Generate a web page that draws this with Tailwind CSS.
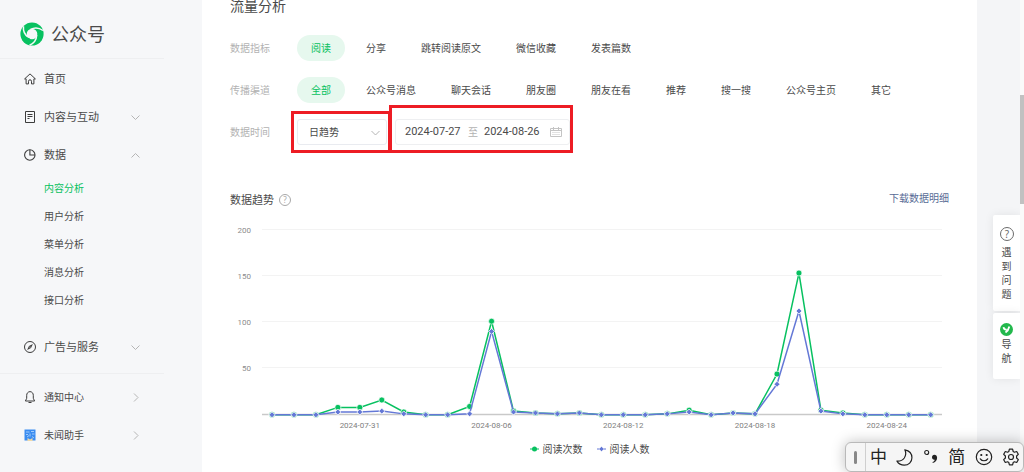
<!DOCTYPE html>
<html lang="zh-CN">
<head>
<meta charset="utf-8">
<meta name="viewport" content="width=device-width, initial-scale=1">
<title>公众号 - 内容分析</title>
<script src="https://cdn.jsdelivr.net/npm/@tailwindcss/browser@4"></script>
</head>
<body class="bg-white font-['Noto_Sans','Noto_Sans_CJK_SC',sans-serif] text-[#4a4a4a]">
<div class="relative flex min-h-screen overflow-hidden">

  <!-- Sidebar -->
  <aside class="w-[202px] shrink-0 bg-[#f6f7f9]">
    <div class="mr-[38px] flex h-[59px] items-center gap-[7px] border-b border-[#eeeff1] pt-[9px] pl-5">
      <svg class="size-6" viewBox="0 0 24 24" fill="none" stroke="#f6f7f9" stroke-width="1.500" aria-hidden="true">
        <circle cx="12" cy="12" r="11.600" fill="#07c160" stroke="none"/>
        <circle cx="12" cy="12" r="5.300" fill="#f6f7f9" stroke="none"/>
        <path d="M10.500 7.400C14 5.600 19 5.600 23 8.500"/>
        <path transform="rotate(120 12 12)" d="M10.500 7.400C14 5.600 19 5.600 23 8.500"/>
        <path transform="rotate(240 12 12)" d="M10.500 7.400C14 5.600 19 5.600 23 8.500"/>
        <path d="M6.200 15.200v3l2.600-1.300 1.500-.4z" fill="#07c160" stroke="none"/>
      </svg>
      <span class="text-lg leading-6">公众号</span>
    </div>
    <nav class="mr-[38px] text-[11px]" aria-label="主导航">
      <a href="#" class="mt-px flex h-[38px] items-center gap-2 pl-6">
        <svg class="size-3" viewBox="0 0 12 12" fill="none" stroke="#3c3c3c" stroke-width="1" stroke-linejoin="round"><path d="M6 .9.6 5.900h1.500v5h2.400V8.300a1.500 1.500 0 0 1 3 0v2.600h2.400v-5h1.500z"/></svg>
        <span>首页</span>
      </a>
      <a href="#" class="flex h-[38px] items-center gap-2 px-6">
        <svg class="size-3" viewBox="0 0 12 12" fill="none" stroke="#3c3c3c"><path d="M1.500.5h9v11h-9zM3.500 3.500h5M3.500 5.500h5M3.500 7.500h2"/></svg>
        <span class="flex-1">内容与互动</span>
        <svg class="h-[5px] w-[9px]" viewBox="0 0 9 5" fill="none" stroke="#b5b5b5"><path d="m.5.500 4 4 4-4"/></svg>
      </a>
      <a href="#" class="flex h-[38px] items-center gap-2 px-6">
        <svg class="size-3" viewBox="0 0 12 12" fill="none" stroke="#3c3c3c" stroke-width="1.100"><circle cx="5.800" cy="6" r="5.200"/><path d="M5.900.8V6h5.100"/></svg>
        <span class="flex-1">数据</span>
        <svg class="h-[5px] w-[9px]" viewBox="0 0 9 5" fill="none" stroke="#b5b5b5"><path d="m.5 4.500 4-4 4 4"/></svg>
      </a>
      <div class="mb-[14px] flex flex-col text-[10px]">
        <a href="#" class="flex h-7 items-center pl-11 text-[#07c160]" aria-current="page">内容分析</a>
        <a href="#" class="flex h-7 items-center pl-11">用户分析</a>
        <a href="#" class="flex h-7 items-center pl-11">菜单分析</a>
        <a href="#" class="flex h-7 items-center pl-11">消息分析</a>
        <a href="#" class="flex h-7 items-center pl-11">接口分析</a>
      </div>
      <a href="#" class="flex h-[38px] items-center gap-2 px-6">
        <svg class="size-3" viewBox="0 0 12 12" fill="none" stroke="#3c3c3c"><circle cx="6" cy="6" r="5.500"/><path d="M8.900 3.100 7 7 3.100 8.900 5 5z" fill="#3c3c3c" stroke="none"/><circle cx="6" cy="6" r=".6" fill="#f6f7f9" stroke="none"/></svg>
        <span class="flex-1">广告与服务</span>
        <svg class="h-[5px] w-[9px]" viewBox="0 0 9 5" fill="none" stroke="#b5b5b5"><path d="m.5.500 4 4 4-4"/></svg>
      </a>
      <div class="mt-[7px] border-t border-[#eeeff1] pt-1 text-[10px]">
        <a href="#" class="flex h-[38px] items-center gap-2 px-6">
          <svg class="size-3" viewBox="0 0 12 12" fill="none" stroke="#3c3c3c" stroke-linejoin="round"><path d="M6 .6C3.900.8 2.700 2.300 2.700 4.300v3L1.400 10h9.200L9.300 7.300v-3C9.300 2.300 8.100.8 6 .6zM4.500 11.500h3"/></svg>
          <span class="flex-1">通知中心</span>
          <svg class="h-[9px] w-[9px]" viewBox="0 0 9 9" fill="none" stroke="#b5b5b5"><path d="m3 .5 4 4-4 4"/></svg>
        </a>
        <a href="#" class="flex h-[38px] items-center gap-2 px-6">
          <svg class="size-3" viewBox="0 0 12 12"><path fill="#3b8cf0" d="M.5.500h11v11H.5z"/><path d="M2 3h3.500M7 2.500h3M2 5.500h2M6 4.500v3M8 5h2.500M3 8l2-1.500M8 7.500l2 1.500" stroke="#b9dcff" fill="none" stroke-width=".8"/><path fill="#f0d9a8" d="M3.500 9 6 10.500 8.500 9v3h-5z"/></svg>
          <span class="flex-1">未闻助手</span>
          <svg class="h-[9px] w-[9px]" viewBox="0 0 9 9" fill="none" stroke="#b5b5b5"><path d="m3 .5 4 4-4 4"/></svg>
        </a>
      </div>
    </nav>
  </aside>

  <!-- Main content -->
  <main class="min-w-0 flex-1 px-7 text-[10px]">
    <h2 class="-mt-1 text-sm leading-5">流量分析</h2>

    <div class="mt-[19px] flex flex-col gap-4">
      <div class="flex h-[26px] items-center" role="group" aria-labelledby="metric">
        <span id="metric" class="w-[67px] text-[#b2b2b2]">数据指标</span>
        <div class="flex h-full gap-[7px]">
          <button class="rounded-full bg-[#e6f8ee] px-[14px] text-[#07c160]">阅读</button>
          <button class="px-[14px]">分享</button>
          <button class="px-[14px]">跳转阅读原文</button>
          <button class="px-[14px]">微信收藏</button>
          <button class="px-[14px]">发表篇数</button>
        </div>
      </div>
      <div class="flex h-[26px] items-center" role="group" aria-labelledby="channel">
        <span id="channel" class="w-[67px] text-[#b2b2b2]">传播渠道</span>
        <div class="flex h-full gap-[7px]">
          <button class="rounded-full bg-[#e6f8ee] px-[14px] text-[#07c160]">全部</button>
          <button class="px-[14px]">公众号消息</button>
          <button class="px-[14px]">聊天会话</button>
          <button class="px-[14px]">朋友圈</button>
          <button class="px-[14px]">朋友在看</button>
          <button class="px-[14px]">推荐</button>
          <button class="px-[14px]">搜一搜</button>
          <button class="px-[14px]">公众号主页</button>
          <button class="px-[14px]">其它</button>
        </div>
      </div>
      <div class="flex h-[26px] items-center">
        <label for="trend" class="w-[67px] text-[#b2b2b2]">数据时间</label>
        <div class="relative h-full w-[90px]">
          <select id="trend" class="h-full w-full appearance-none rounded-[3px] border border-[#e9ebf0] bg-white pl-[11px] text-[10px]">
            <option>日趋势</option>
          </select>
          <svg class="pointer-events-none absolute top-[11px] right-[7px] h-[6px] w-[9px]" viewBox="0 0 9 6" fill="none" stroke="#b5b5b5"><path d="m.5 1 4 4 4-4"/></svg>
          <div class="pointer-events-none absolute -top-2 -right-1 -bottom-2 -left-[6px] border-[3px] border-[#ed1c24]"></div>
        </div>
        <div class="relative ml-2 flex h-full w-[175px] items-center rounded-[3px] border border-[#eeeff1] pl-[9px] font-[Roboto,'Noto_Sans_CJK_SC',sans-serif]">
          <input type="text" aria-label="开始日期" value="2024-07-27" class="w-[63px] pt-px text-[11px]">
          <span class="w-4 text-[#b2b2b2]">至</span>
          <input type="text" aria-label="结束日期" value="2024-08-26" class="w-[66px] pt-px text-[11px]">
          <svg class="h-[11px] w-3" viewBox="0 0 12 11" fill="none" stroke="#c4c4c4"><path d="M.5 1.500h11v8H.5zM3.500 0v3M8.500 0v3M.5 3.500h11"/><path d="M2.500 5.500h7M2.500 7.500h7" stroke-dasharray="1 1"/></svg>
          <div class="pointer-events-none absolute -top-[15px] -right-[4px] -bottom-[9px] -left-[7px] border-[3px] border-[#ed1c24]"></div>
        </div>
      </div>
    </div>

    <section class="mt-[45px]" aria-label="数据趋势">
      <div class="flex h-5 items-center gap-[5px]">
        <h3 class="text-[11px]">数据趋势</h3>
        <svg class="size-3" viewBox="0 0 12 12"><circle cx="6" cy="6" r="5.500" fill="none" stroke="#a8a8a8"/><text x="6" y="9" text-anchor="middle" font-size="8" fill="#a8a8a8">?</text></svg>
        <a href="#" class="mb-1 ml-auto text-[#576b95]">下载数据明细</a>
      </div>
      <svg id="chart" class="mt-[10px] w-full font-[Roboto,sans-serif]" viewBox="0 0 719 215" role="img" aria-label="阅读次数与阅读人数趋势"></svg>
      <div class="mt-[6px] flex h-4 items-center justify-center gap-[14px]">
        <span class="flex items-center gap-1"><svg class="h-[6px] w-[9px]" viewBox="0 0 9 6"><path d="M0 3h9" stroke="#07c160"/><circle cx="4.500" cy="3" r="2.500" fill="#07c160"/></svg>阅读次数</span>
        <span class="flex items-center gap-1"><svg class="h-[6px] w-[9px]" viewBox="0 0 9 6"><path d="M0 3h9" stroke="#6478d6"/><path d="M4.500.500 7 3 4.500 5.500 2 3z" fill="#6478d6" stroke="#fff" stroke-width=".4"/></svg>阅读人数</span>
      </div>
    </section>
  </main>

  <!-- Help shortcuts in the right margin -->
  <div class="flex w-[43px] shrink-0 flex-col items-end gap-[2px] bg-[#f4f5f7] pt-[215px] text-[10px] leading-[14px]">
    <a href="#" class="flex h-24 w-[27px] flex-col items-center rounded-l-xs bg-white pt-3 shadow-[0_0_10px_rgba(0,0,0,0.08)]">
      <svg class="mb-1 size-[14px]" viewBox="0 0 14 14"><circle cx="7" cy="7" r="6.500" fill="none" stroke="#6a6a6a"/><text x="7" y="10.500" text-anchor="middle" font-size="10" fill="#6a6a6a">?</text></svg>
      <span class="w-[10px]">遇到问题</span>
    </a>
    <a href="#" class="flex h-[66px] w-[27px] flex-col items-center rounded-l-xs bg-white pt-[10px] shadow-[0_0_10px_rgba(0,0,0,0.08)]">
      <svg class="mb-px size-[13px]" viewBox="0 0 13 13"><circle cx="6.500" cy="6.500" r="6.500" fill="#22b84c"/><path d="M3.500 4.200c.3 1.800 1.300 2.700 3.300 2.400" fill="none" stroke="#fff" stroke-width="1.800"/><path d="M9.300 3.500C8.800 6 7.700 8 5.500 9.500" fill="none" stroke="#fff" stroke-width="1.800"/></svg>
      <span class="w-[10px]">导航</span>
    </a>
  </div>
  <div class="w-1 shrink-0 bg-[#fafafa] pt-[95px]"><div class="h-[109px] bg-[#c1c1c1]"></div></div>

  <!-- Input method toolbar floating over the page -->
  <div class="absolute right-0 bottom-0 flex h-[30px] w-[179px] items-center rounded-md border border-[#b9b9b9] bg-[#f5f5f5] text-[#222] shadow-[0_0_14px_rgba(0,0,0,0.25)]" role="toolbar" aria-label="输入法">
    <div class="flex h-full w-5 items-center justify-center border-r border-[#cfcfcf]"><div class="h-[13px] w-[3px] rounded-full bg-[#888]"></div></div>
    <div class="flex flex-1 items-center justify-between pr-[3px] pl-1 text-[17px] leading-5">
      <button aria-label="中文" class="w-[17px]">中</button>
      <button aria-label="半角"><svg class="size-[17px]" viewBox="0 0 16 16" fill="none" stroke="#222" stroke-width="1.100" stroke-linejoin="round"><path d="M8.300.8c4.100.8 6.700 3.700 6.700 7.400 0 4.100-3.200 7-7.200 7-3 0-5.400-1.300-6.900-3.800 3 .1 5.400-.7 6.900-2.900C9.400 6 9.500 3.200 8.300.8z"/></svg></button>
      <button aria-label="中文标点"><svg class="size-4" viewBox="0 0 16 16"><circle cx="3.700" cy="3.500" r="2" fill="none" stroke="#222" stroke-width="1.100"/><path d="M11.300 5.800c1.700 0 2.800 1.200 2.800 3 0 2.400-1.500 4.400-4.300 5.200l-.3-.9c1.400-.6 2.100-1.400 2.200-2.400-1.600.2-2.700-.9-2.700-2.400 0-1.500 1-2.500 2.300-2.500z" fill="#222"/></svg></button>
      <button aria-label="简体" class="w-[17px]">简</button>
      <button aria-label="表情"><svg class="size-[18px]" viewBox="0 0 18 18" fill="none" stroke="#222" stroke-width="1.200"><circle cx="9" cy="9" r="7.700"/><path d="M5.300 10.800c1.700 2.600 5.700 2.600 7.400 0" stroke-linecap="round"/><circle cx="6.300" cy="7" r=".5" fill="#222"/><circle cx="11.700" cy="7" r=".5" fill="#222"/></svg></button>
      <button aria-label="设置"><svg class="size-[18px]" viewBox="0 0 18 18" fill="none" stroke="#222" stroke-width="1.200" stroke-linejoin="round"><circle cx="9" cy="9" r="2.500"/><path d="M7.400 1.200h3.200l.6 2.300 1.200.7 2.300-.7 1.600 2.800L14.600 8v2l1.700 1.700-1.600 2.800-2.300-.7-1.200.7-.6 2.300H7.400l-.6-2.300-1.200-.7-2.300.7-1.600-2.800L3.400 10V8L1.700 6.300l1.600-2.800 2.300.7 1.200-.7z"/></svg></button>
    </div>
  </div>
</div>

<script>
  const reads = [0,0,0,8,8,16,3,0,0,9,101,4,2,1,2,0,0,0,1,5,0,2,1,44,153,5,2,0,0,0,0];
  const readers = [0,0,0,3,3,4,1,0,0,1,90,3,2,1,2,0,0,0,1,3,0,2,1,33,112,4,1,0,0,0,0];
  const x = i => 42 + i * 658.7 / 30;
  const y = v => 194.8 - v * 0.9265;
  const line = (data, color) =>
    `<polyline points="${data.map((v, i) => x(i) + ',' + y(v)).join(' ')}" fill="none" stroke="${color}" stroke-width="1.5"/>`;
  let out = '';
  for (const v of [50, 100, 150, 200]) {
    const gy = Math.round(y(v));
    out += `<path d="M32 ${gy - 0.5}h680" stroke="#f3f3f3"/><text x="21" y="${gy + 3}" text-anchor="end" font-size="8" fill="#8c8c8c">${v}</text>`;
  }
  out += '<path d="M32 194.5h680" stroke="#c9c9c9" stroke-width="1.300"/>';
  [[4, '2024-07-31'], [10, '2024-08-06'], [16, '2024-08-12'], [22, '2024-08-18'], [28, '2024-08-24']].forEach(([i, d]) => {
    out += `<text x="${x(i)}" y="208" text-anchor="middle" font-size="8" fill="#808080">${d}</text>`;
  });
  out += line(reads, '#07c160');
  reads.forEach((v, i) => { out += `<circle cx="${x(i)}" cy="${y(v)}" r="3" fill="#07c160" stroke="#fff" stroke-width=".7"/>`; });
  out += line(readers, '#6478d6');
  readers.forEach((v, i) => {
    out += `<path d="M${x(i)} ${y(v) - 3}l3 3-3 3-3-3z" fill="#6478d6" stroke="#fff" stroke-width=".8"/>`;
  });
  document.getElementById('chart').innerHTML = out;
</script>
</body>
</html>
